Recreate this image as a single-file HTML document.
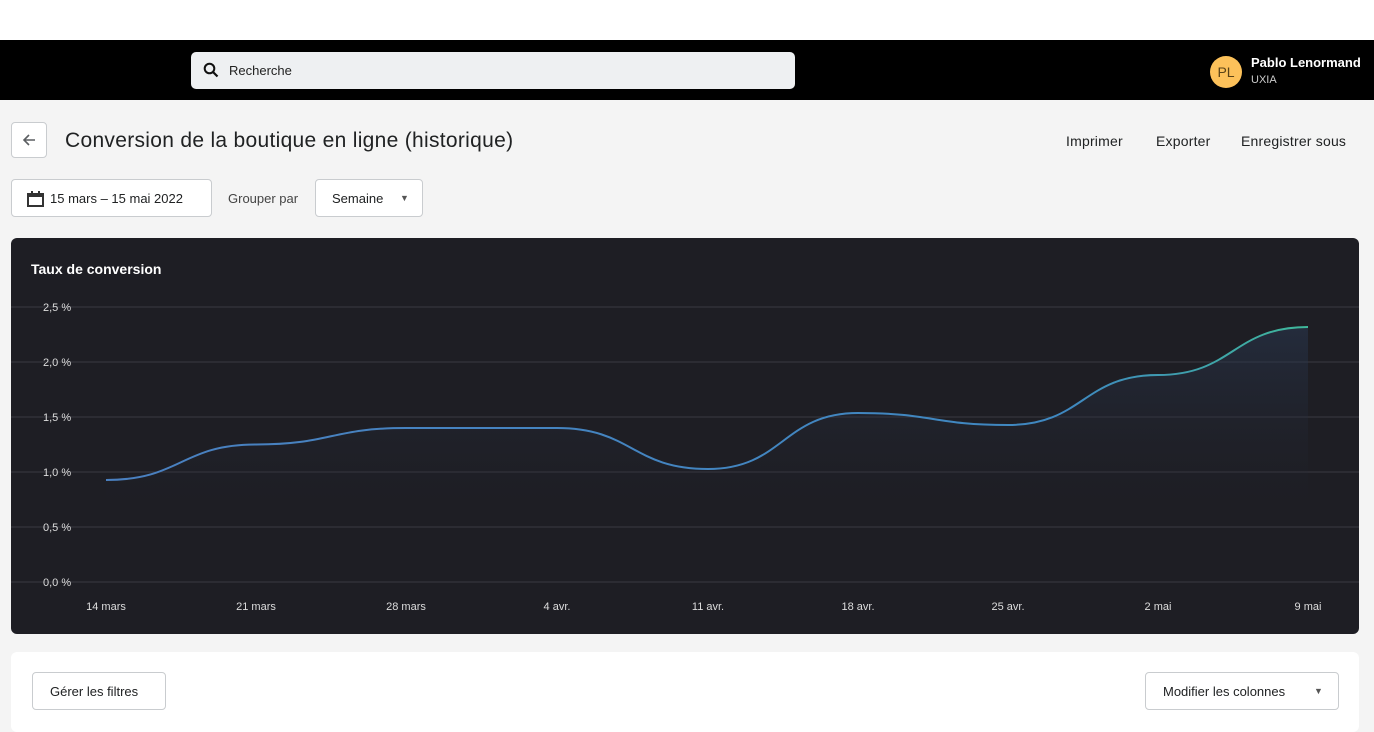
<!DOCTYPE html>
<html><head><meta charset="utf-8"><style>
body{margin:0;width:1374px;height:723px;overflow:hidden;background:#f4f4f4;font-family:"Liberation Sans",sans-serif;position:relative}
.top{position:absolute;left:0;top:0;width:1374px;height:40px;background:#fff}
.bar{position:absolute;left:0;top:40px;width:1374px;height:60px;background:#000}
.search{position:absolute;left:191px;top:52px;width:604px;height:37px;background:#eef0f2;border-radius:5px}
.search span{position:absolute;left:38px;top:11px;font-size:13px;color:#222}
.av{position:absolute;left:1210px;top:56px;width:32px;height:32px;border-radius:50%;background:#fcc15a;color:#5a4317;font-size:14px;text-align:center;line-height:32px}
.nm{position:absolute;left:1251px;top:55px;color:#fff;font-size:13px;font-weight:bold}
.org{position:absolute;left:1251px;top:74px;color:#ccc;font-size:11px}
.btn{position:absolute;background:#fff;border:1px solid #c9cccf;border-radius:4px;box-sizing:border-box;font-size:13px;color:#202223}
h1{position:absolute;left:65px;top:129px;margin:0;font-size:21px;letter-spacing:0.3px;font-weight:normal;color:#202223}
.act{position:absolute;top:133px;font-size:14px;color:#202223;letter-spacing:0.2px}
.chart{position:absolute;left:11px;top:238px;width:1348px;height:396px;background:#1e1e24;border-radius:6px}
.card{position:absolute;left:11px;top:652px;width:1348px;height:80px;background:#fff;border-radius:6px}
</style></head><body>
<div class="top"></div>
<div class="bar"></div>
<div class="search"><svg style="position:absolute;left:12px;top:10px" width="16" height="16" viewBox="0 0 16 16"><circle cx="6.5" cy="6.5" r="4.8" fill="none" stroke="#111" stroke-width="2"/><path d="M10 10l4.5 4.5" stroke="#111" stroke-width="2.2"/></svg><span>Recherche</span></div>
<div class="av">PL</div><div class="nm">Pablo Lenormand</div><div class="org">UXIA</div>
<div class="btn" style="left:11px;top:122px;width:36px;height:36px"><svg style="position:absolute;left:9px;top:9px" width="16" height="16" viewBox="0 0 16 16"><path d="M14 8H3M8 3L3 8l5 5" fill="none" stroke="#5c5f62" stroke-width="1.6"/></svg></div>
<h1>Conversion de la boutique en ligne (historique)</h1>
<div class="act" style="left:1066px">Imprimer</div><div class="act" style="left:1156px">Exporter</div><div class="act" style="left:1241px">Enregistrer sous</div>
<div class="btn" style="left:11px;top:179px;width:201px;height:38px"><svg style="position:absolute;left:15px;top:11px" width="17" height="16" viewBox="0 0 17 16"><rect x="1" y="3" width="15" height="12" fill="none" stroke="#333" stroke-width="2"/><rect x="1" y="3" width="15" height="3" fill="#333"/><path d="M5 0v4M12 0v4" stroke="#333" stroke-width="2"/></svg><span style="position:absolute;left:38px;top:11px">15 mars – 15 mai 2022</span></div>
<div style="position:absolute;left:228px;top:191px;font-size:13px;color:#444">Grouper par</div>
<div class="btn" style="left:315px;top:179px;width:108px;height:38px"><span style="position:absolute;left:16px;top:11px">Semaine</span><span style="position:absolute;left:84px;top:13px;font-size:9px;color:#555">▼</span></div>
<div class="chart">
<div style="position:absolute;left:20px;top:23px;color:#fff;font-size:14px;font-weight:bold">Taux de conversion</div>
<svg width="1348" height="396" style="position:absolute;left:0;top:0" font-family="Liberation Sans" font-size="11" fill="#ddd">
<defs><linearGradient id="g" x1="0" x2="1"><stop offset="0" stop-color="#4a80c0"/><stop offset="0.8" stop-color="#3f88c0"/><stop offset="1" stop-color="#3fb89a"/></linearGradient>
<linearGradient id="f" x1="0" y1="0" x2="0" y2="1"><stop offset="0" stop-color="#2a3a55" stop-opacity=".5"/><stop offset="1" stop-color="#1e1e24" stop-opacity="0"/></linearGradient></defs>
<g stroke="#3a3a42" stroke-width="1"><path d="M0 69H1348M0 124H1348M0 179H1348M0 234H1348M0 289H1348M0 344H1348"/></g>
<g><text x="32" y="73">2,5 %</text><text x="32" y="128">2,0 %</text><text x="32" y="183">1,5 %</text><text x="32" y="238">1,0 %</text><text x="32" y="293">0,5 %</text><text x="32" y="348">0,0 %</text></g>
<g text-anchor="middle"><text x="95" y="372">14 mars</text><text x="245" y="372">21 mars</text><text x="395" y="372">28 mars</text><text x="546" y="372">4 avr.</text><text x="697" y="372">11 avr.</text><text x="847" y="372">18 avr.</text><text x="997" y="372">25 avr.</text><text x="1147" y="372">2 mai</text><text x="1297" y="372">9 mai</text></g>
<path d="M95 242C170 242 170 206.5 245 206.5C320 206.5 320 190 395 190C470 190 470 190 546 190C621 190 621 231 697 231C772 231 772 175 847 175C922 175 922 187 997 187C1072 187 1072 137 1147 137C1222 137 1222 89 1297 89L1297 290L95 290Z" fill="url(#f)"/>
<path d="M95 242C170 242 170 206.5 245 206.5C320 206.5 320 190 395 190C470 190 470 190 546 190C621 190 621 231 697 231C772 231 772 175 847 175C922 175 922 187 997 187C1072 187 1072 137 1147 137C1222 137 1222 89 1297 89" fill="none" stroke="url(#g)" stroke-width="2"/>
</svg></div>
<div class="card">
<div class="btn" style="left:21px;top:20px;width:134px;height:38px"><span style="position:absolute;left:17px;top:11px">Gérer les filtres</span></div>
<div class="btn" style="left:1134px;top:20px;width:194px;height:38px"><span style="position:absolute;left:17px;top:11px">Modifier les colonnes</span><span style="position:absolute;left:168px;top:13px;font-size:9px;color:#555">▼</span></div>
</div>
</body></html>
